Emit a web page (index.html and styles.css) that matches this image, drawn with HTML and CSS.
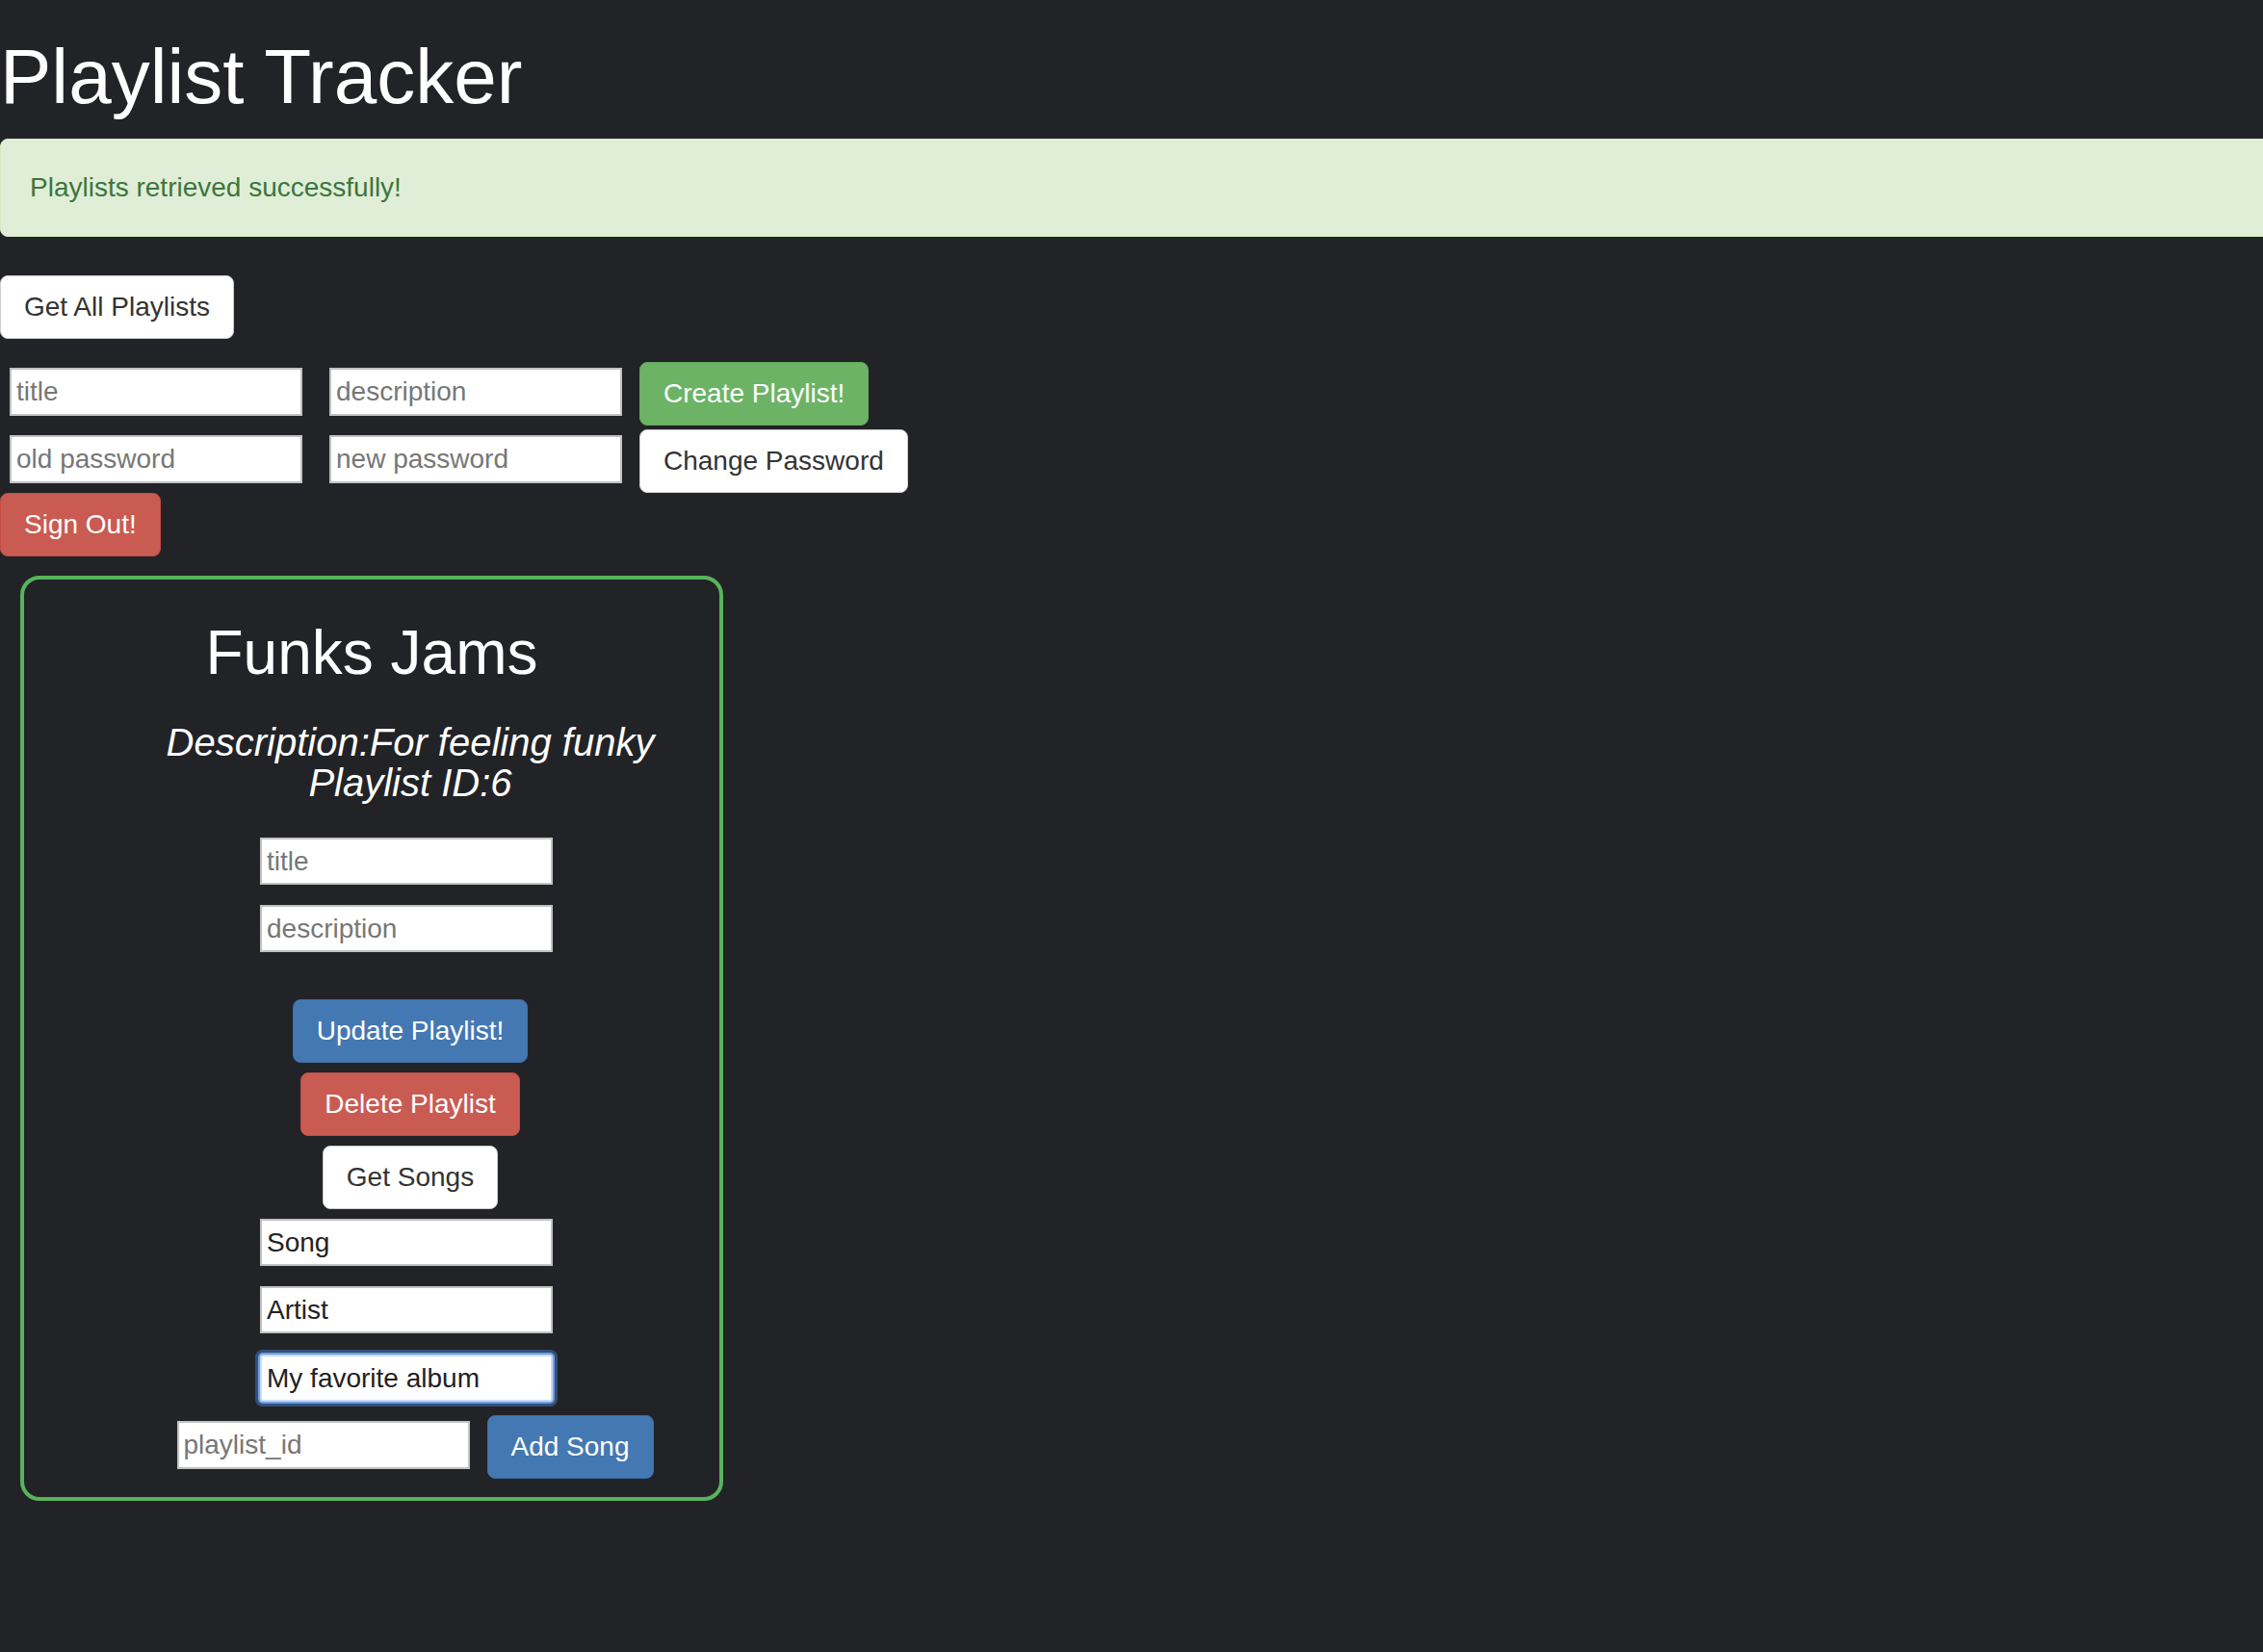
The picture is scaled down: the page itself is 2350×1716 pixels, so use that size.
FILE: index.html
```html
<!DOCTYPE html>
<html lang="en">
<head>
<meta charset="utf-8">
<title>Playlist Tracker</title>
<link rel="stylesheet" href="styles.css">
</head>
<body>
<h1 class="page-title">Playlist Tracker</h1>
<div class="alert">Playlists retrieved successfully!</div>
<div class="toolbar"><button class="btn btn-default" type="button">Get All Playlists</button></div>
<form class="form-row row-create">
  <input class="field" type="text" placeholder="title">
  <input class="field" type="text" placeholder="description">
  <button class="btn btn-success" type="button">Create Playlist!</button>
</form>
<form class="form-row row-password">
  <input class="field" type="password" placeholder="old password">
  <input class="field" type="password" placeholder="new password">
  <button class="btn btn-default" type="button">Change Password</button>
</form>
<div class="toolbar"><button class="btn btn-danger" type="button">Sign Out!</button></div>
<section class="card">
  <h2 class="card-title">Funks Jams</h2>
  <div class="card-body">
    <p class="card-desc"><span class="desc-line">Description:For feeling funky</span><span class="desc-line">Playlist ID:6</span></p>
    <input class="field card-field edit-title" type="text" placeholder="title">
    <input class="field card-field edit-desc" type="text" placeholder="description">
    <button class="btn btn-primary btn-update" type="button">Update Playlist!</button>
    <button class="btn btn-danger btn-delete" type="button">Delete Playlist</button>
    <button class="btn btn-default btn-songs" type="button">Get Songs</button>
    <input class="field card-field song-field" type="text" value="Song">
    <input class="field card-field artist-field" type="text" value="Artist">
    <input class="field card-field album-field field-focus" type="text" value="My favorite album">
    <div class="add-row">
      <input class="field add-field" type="text" placeholder="playlist_id">
      <button class="btn btn-primary" type="button">Add Song</button>
    </div>
  </div>
</section>
</body>
</html>
```

FILE: styles.css
```css
html, body {
  margin: 0;
  padding: 0;
}

body {
  background: #222327;
  color: #fff;
  font-family: "Liberation Sans", Arial, Helvetica, sans-serif;
  font-size: 28px;
  line-height: 40px;
  overflow-x: hidden;
}

.page-title {
  margin: 36px 0 0;
  font-size: 80px;
  line-height: 88px;
  font-weight: normal;
}

.alert {
  margin: 20px -12px 40px 0;
  padding: 30px;
  border: 1px solid #d6e9c6;
  border-radius: 8px;
  background: #e0eed8;
  color: #3c763d;
}

.toolbar {
  display: flex;
}

.btn {
  display: inline-block;
  box-sizing: border-box;
  height: 66px;
  padding: 12px 24px;
  border: 1px solid transparent;
  border-radius: 8px;
  font-family: inherit;
  font-size: 28px;
  line-height: 40px;
  white-space: nowrap;
  cursor: pointer;
}

.btn-default {
  background: #fff;
  border-color: #ccc;
  color: #333;
}

.btn-success {
  background: #6cb366;
  border-color: #62a85c;
  color: #fff;
}

.btn-danger {
  background: #c95b53;
  border-color: #c24d45;
  color: #fff;
}

.btn-primary {
  background: #4478b2;
  border-color: #3e6ea5;
  color: #fff;
}

.form-row {
  display: flex;
  align-items: flex-start;
  margin: 0;
  padding-left: 10px;
}

.row-create {
  margin-top: 24px;
}

.row-password {
  margin-top: 4px;
}

.field {
  box-sizing: border-box;
  width: 304px;
  height: 50px;
  margin: 6px 0 0;
  padding: 0 5px;
  border: 2px solid #c2c2c2;
  border-radius: 0;
  background: #fff;
  color: #222;
  font-family: inherit;
  font-size: 28px;
  outline: none;
}

.field::placeholder {
  color: #777;
}

.form-row .field + .field {
  margin-left: 28px;
}

.form-row .btn {
  margin-left: 18px;
}

.card {
  box-sizing: border-box;
  width: 730px;
  margin: 20px 0 0 21px;
  padding-bottom: 19px;
  border: 4px solid #58b35b;
  border-radius: 20px;
}

.card-title {
  margin: 41px 0 0;
  text-align: center;
  font-size: 64px;
  line-height: 70px;
  font-weight: normal;
}

.card-body {
  display: flex;
  flex-direction: column;
  align-items: center;
  padding-left: 80px;
}

.card-desc {
  margin: 37px 0 0;
  font-size: 40px;
  line-height: 42px;
  font-style: italic;
  text-align: center;
}

.desc-line {
  display: block;
}

.card-field {
  height: 49px;
  margin: 0 8px 0 0;
}

.edit-title {
  margin-top: 36px;
}

.edit-desc {
  margin-top: 21px;
}

.btn-update {
  margin-top: 49px;
}

.btn-delete {
  margin-top: 10px;
}

.btn-songs {
  margin-top: 10px;
}

.song-field {
  margin-top: 10px;
}

.artist-field {
  margin-top: 21px;
}

.album-field {
  margin-top: 22px;
}

.field-focus {
  border-color: #c5dbf6;
  border-radius: 3px;
  box-shadow: 0 0 0 2px #6f9ee0, 0 0 0 5px #33507a;
}

.add-row {
  display: flex;
  align-items: flex-start;
  margin: 14px 0 0 10px;
}

.add-field {
  margin-top: 6px;
}

.add-row .btn {
  margin-left: 18px;
}
```
